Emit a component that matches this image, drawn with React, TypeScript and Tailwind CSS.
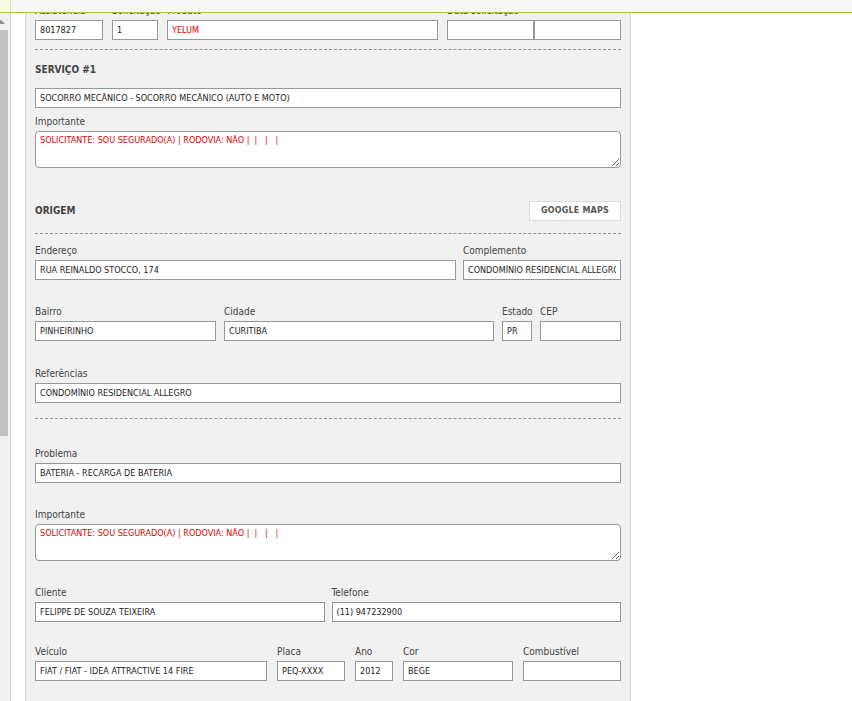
import { useId, type ReactNode } from "react";

type FieldProps = {
  label: string;
  value?: string;
  className?: string;
  red?: boolean;
};

const inputBase =
  "block h-5 w-full min-w-0 border border-[#969896] bg-white px-1 text-[9px] leading-4 focus:outline-none";

function Field({ label, value = "", className = "", red = false }: FieldProps) {
  const id = useId();

  return (
    <div className={`min-w-0 ${className}`}>
      <label htmlFor={id} className="block h-[18px] whitespace-nowrap text-[10px] leading-[18px]">
        {label}
      </label>
      <input
        id={id}
        type="text"
        defaultValue={value}
        className={`${inputBase} ${red ? "text-[#dc0000]" : "text-[#222]"}`}
      />
    </div>
  );
}

function Notice({ value }: { value: string }) {
  const id = useId();

  return (
    <div>
      <label htmlFor={id} className="block h-[18px] text-[10px] leading-[18px]">
        Importante
      </label>
      <textarea
        id={id}
        defaultValue={value}
        className="block h-[37px] w-full resize rounded-[4px] border border-[#969896] bg-white px-1 py-px text-[9px] leading-[14px] text-[#dc0000] focus:outline-none"
      />
    </div>
  );
}

function Row({ children, className = "" }: { children: ReactNode; className?: string }) {
  return <div className={`flex ${className}`}>{children}</div>;
}

function Divider({ className = "" }: { className?: string }) {
  return <hr className={`border-0 border-t border-dashed border-[#969696] ${className}`} />;
}

const notice = "SOLICITANTE: SOU SEGURADO(A) | RODOVIA: NÃO |  |   |   |";

export default function App() {
  return (
    <div className="flex min-h-screen bg-white font-['DejaVu_Sans_Condensed','DejaVu_Sans',sans-serif] text-[#444]">
      {/* Top bar */}
      <header className="fixed inset-x-0 top-0 z-10 flex h-[13px] border-b border-[#a9c24b] bg-[#f7f7f7]">
        <div className="w-[11px] border-r border-[#dde3bd] bg-[#f9fde0]" />
      </header>

      {/* Side scrollbar */}
      <aside className="w-[11px] shrink-0 border-r border-[#d3d6bd] bg-[#f1f1f1] pt-[13px]">
        <div className="flex h-[17px] w-2 items-center">
          <svg width="5" height="4" viewBox="0 0 5 4" fill="#8f8f8f">
            <path d="M0 0.5L1.2 0L5 4H0Z" />
          </svg>
        </div>
        <div className="h-[406px] w-2 bg-[#c1c1c1]" />
      </aside>

      <main className="ml-3.5 w-full max-w-[606px] border-x border-[#d6d6d6] bg-[#f1f1f1] px-[9px] pt-0.5 pb-5">
        <form>
          <Row className="gap-[9px]">
            <Field label="Assistência" value="8017827" className="w-[68px]" />
            <Field label="Solicitação" value="1" className="w-[46px]" />
            <Field label="Produto" value="YELUM" red className="flex-1" />
            <div className="w-[174px]">
              <label htmlFor="data" className="block h-[18px] text-[10px] leading-[18px]">
                Data solicitação
              </label>
              <div className="flex">
                <input id="data" type="text" className={inputBase} />
                <input type="text" aria-label="Hora" className={inputBase} />
              </div>
            </div>
          </Row>

          <Divider className="mt-[9px]" />

          {/* Serviço */}
          <h2 id="servico" className="mt-[11px] text-[10px] leading-[18px] font-bold">
            SERVIÇO #1
          </h2>
          <input
            type="text"
            aria-labelledby="servico"
            defaultValue="SOCORRO MECÂNICO - SOCORRO MECÂNICO (AUTO E MOTO)"
            className={`${inputBase} mt-[9px] mb-[5px] text-[#222]`}
          />
          <Notice value={notice} />

          {/* Origem */}
          <div className="mt-[33px] flex items-center justify-between">
            <h2 className="text-[10px] leading-[18px] font-bold">ORIGEM</h2>
            <button
              type="button"
              className="h-5 border border-[#dcdcdc] bg-white px-[11px] font-['DejaVu_Sans',sans-serif] text-[8px] font-bold tracking-wide text-[#555]"
            >
              GOOGLE MAPS
            </button>
          </div>
          <Divider className="mt-3" />

          <Row className="mt-2 gap-[7px]">
            <Field label="Endereço" value="RUA REINALDO STOCCO, 174" className="flex-1" />
            <Field label="Complemento" value="CONDOMÍNIO RESIDENCIAL ALLEGRO" className="w-[158px]" />
          </Row>

          <Row className="mt-[23px] gap-2">
            <Field label="Bairro" value="PINHEIRINHO" className="w-[181px]" />
            <Field label="Cidade" value="CURITIBA" className="flex-1" />
            <Field label="Estado" value="PR" className="w-[30px]" />
            <Field label="CEP" className="w-[81px]" />
          </Row>

          <Field label="Referências" value="CONDOMÍNIO RESIDENCIAL ALLEGRO" className="mt-6" />

          <Divider className="mt-[15px]" />

          {/* Problema */}
          <Field label="Problema" value="BATERIA - RECARGA DE BATERIA" className="mt-[26px] mb-[23px]" />
          <Notice value={notice} />

          {/* Cliente e veículo */}
          <Row className="mt-[23px] gap-[7px]">
            <Field label="Cliente" value="FELIPPE DE SOUZA TEIXEIRA" className="flex-1" />
            <Field label="Telefone" value="(11) 947232900" className="flex-1" />
          </Row>

          <Row className="mt-[21px] gap-[10px]">
            <Field label="Veículo" value="FIAT / FIAT - IDEA ATTRACTIVE 14 FIRE" className="flex-1" />
            <Field label="Placa" value="PEQ-XXXX" className="w-[68px]" />
            <Field label="Ano" value="2012" className="w-[38px]" />
            <Field label="Cor" value="BEGE" className="w-[110px]" />
            <Field label="Combustível" className="w-[98px]" />
          </Row>
        </form>
      </main>
    </div>
  );
}
